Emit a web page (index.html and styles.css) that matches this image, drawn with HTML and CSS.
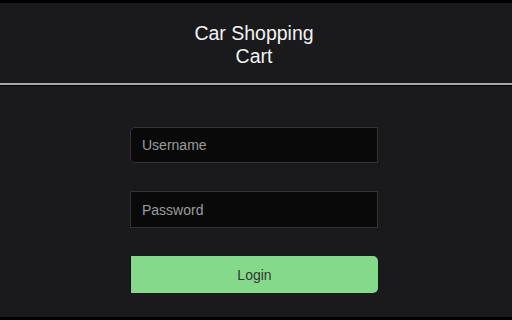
FILE: index.html
```html
<!DOCTYPE html>
<html>
<head>
	<title>Car Shopping Cart</title>
	<link rel="stylesheet" href="styles.css">
</head>
<body>
	<div class="page">
		<div class="header">
			<h1>Car Shopping Cart</h1>
		</div>

		<form class="login">
			<input class="field username" type="text" placeholder="Username">
			<input class="field password" type="password" placeholder="Password">
			<button class="login-btn" type="button">Login</button>
		</form>
	</div>
</body>
</html>
```

FILE: styles.css
```css
* {
	margin: 0;
	padding: 0;
	box-sizing: border-box;
	font-family: "Liberation Sans", Arial, sans-serif;
}

body {
	background: #000;
	padding: 3px 0;
}

.page {
	background: #1a1a1c;
	height: 314px;
}

.header {
	display: flex;
	justify-content: center;
	padding: 19px 4px 15px 0;
	border-bottom: 2px solid #a9a9a9;
	box-shadow: 0 1px 0 #000;
}

.header h1 {
	width: 140px;
	text-align: center;
	color: #f2f2f2;
	font-size: 19.5px;
	font-weight: normal;
	line-height: 23px;
}

.login {
	display: flex;
	flex-flow: column;
	align-items: center;
	padding: 42px 4px 0 0;
}

.field {
	width: 248px;
	height: 36px;
	padding: 0 11px;
	background: #09090a;
	border: 1px solid #333335;
	color: #ddd;
	font-size: 14px;
	outline: none;
}

.field::placeholder {
	color: #9c9c9c;
}

.username {
	border-radius: 5px 0 0 5px;
	margin-bottom: 28px;
}

.password {
	height: 37px;
	margin-bottom: 28px;
}

.login-btn {
	width: 248px;
	height: 37px;
	background: #84da8a;
	border: none;
	border-left: 1px solid #101010;
	border-radius: 0 5px 5px 0;
	color: #333;
	font-size: 14px;
	cursor: pointer;
}
```
